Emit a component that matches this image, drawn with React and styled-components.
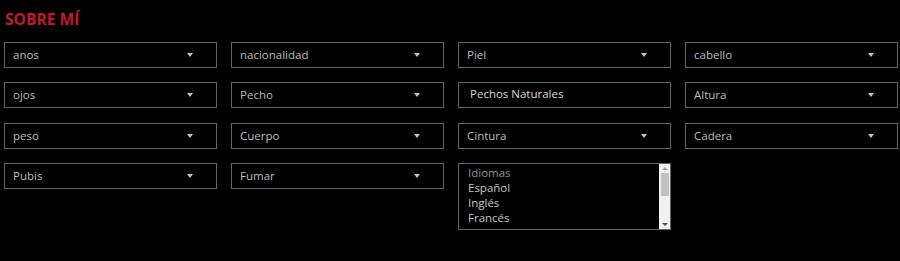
import React from "react";
import styled, { createGlobalStyle } from "styled-components";

const Global = createGlobalStyle`
  html, body { margin: 0; padding: 0; background: #000; }
  body { font-family: "Open Sans", "Noto Sans", sans-serif; }
`;

const Page = styled.div`
  width: 900px;
  height: 261px;
  background: #000;
  padding: 9px 4px 0 4px;
  box-sizing: border-box;
`;

const Title = styled.h2`
  margin: 0 0 12px 1px;
  font-size: 15.6px;
  line-height: 21px;
  font-weight: 700;
  color: #c01a2b;
`;

const Grid = styled.div`
  display: grid;
  grid-template-columns: repeat(4, 213px);
  column-gap: 14px;
  row-gap: 14.4px;
  align-items: start;
`;

const Select = styled.div`
  height: 26px;
  box-sizing: border-box;
  border: 1px solid #656565;
  display: flex;
  align-items: center;
  justify-content: space-between;
  padding: 0 23px 1px 8px;
  color: #bdbdbd;
  font-size: 11.5px;
`;

const Arrow = styled.span`
  width: 0;
  height: 0;
  border-left: 3.5px solid transparent;
  border-right: 3.5px solid transparent;
  border-top: 4px solid #c4c4c4;
  margin-top: 1px;
`;

const Input = styled.div`
  height: 26px;
  box-sizing: border-box;
  border: 1px solid #656565;
  display: flex;
  align-items: center;
  padding: 0 11px 4px 11px;
  color: #dadada;
  font-size: 11.5px;
  font-weight: 500;
`;

const ListBox = styled.div`
  height: 67px;
  box-sizing: border-box;
  border: 1px solid #656565;
  display: flex;
  color: #bdbdbd;
  font-size: 11.5px;
`;

const Options = styled.div`
  flex: 1;
  padding: 2px 9px;
  line-height: 14.8px;
`;

const Option = styled.div`
  color: ${(p) => (p.$muted ? "#939393" : "#c4c4c4")};
`;

const Scrollbar = styled.div`
  width: 11px;
  background: #f0f0f0;
  display: flex;
  flex-direction: column;
  align-items: center;
  padding: 3px 0 3px;
  box-sizing: border-box;
`;

const ScrollArrow = styled.span`
  width: 0;
  height: 0;
  border-left: 3px solid transparent;
  border-right: 3px solid transparent;
  ${(p) =>
    p.$up
      ? "border-bottom: 3px solid #a3a3a3;"
      : "border-top: 3px solid #505050;"}
`;

const Track = styled.div`
  flex: 1;
  display: flex;
  flex-direction: column;
  width: 100%;
  align-items: center;
`;

const Thumb = styled.div`
  width: 8px;
  height: 23px;
  background: #c1c1c1;
  margin-top: 3px;
`;

const SelectField = ({ label }) => (
  <Select>
    <span>{label}</span>
    <Arrow />
  </Select>
);

export default function App() {
  return (
    <>
      <Global />
      <Page>
        <Title>SOBRE MÍ</Title>
        <Grid>
          <SelectField label="anos" />
          <SelectField label="nacionalidad" />
          <SelectField label="Piel" />
          <SelectField label="cabello" />

          <SelectField label="ojos" />
          <SelectField label="Pecho" />
          <Input>Pechos Naturales</Input>
          <SelectField label="Altura" />

          <SelectField label="peso" />
          <SelectField label="Cuerpo" />
          <SelectField label="Cintura" />
          <SelectField label="Cadera" />

          <SelectField label="Pubis" />
          <SelectField label="Fumar" />
          <ListBox>
            <Options>
              <Option $muted>Idiomas</Option>
              <Option>Español</Option>
              <Option>Inglés</Option>
              <Option>Francés</Option>
            </Options>
            <Scrollbar>
              <ScrollArrow $up />
              <Track>
                <Thumb />
              </Track>
              <ScrollArrow />
            </Scrollbar>
          </ListBox>
        </Grid>
      </Page>
    </>
  );
}
